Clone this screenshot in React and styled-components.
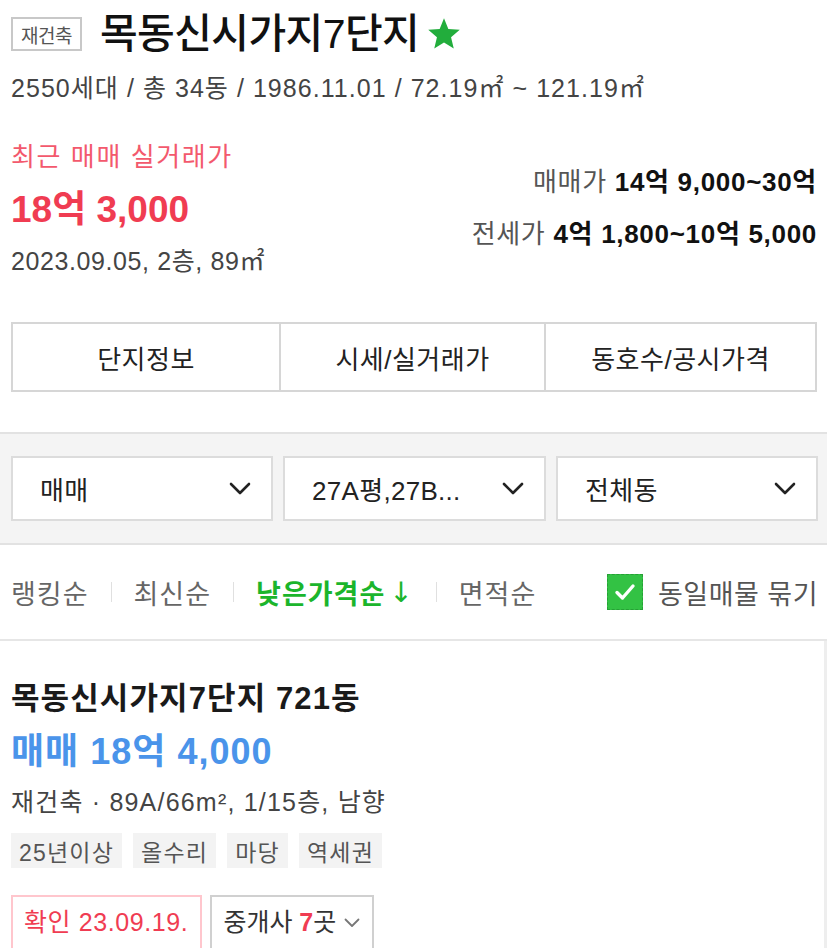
import React from "react";
import styled, { createGlobalStyle } from "styled-components";

const Global = createGlobalStyle`
  html, body { margin: 0; padding: 0; background: #fff; }
  body {
    width: 827px;
    overflow: hidden;
    font-family: "Liberation Sans", "Noto Sans CJK KR", sans-serif;
    color: #222;
  }
  * { box-sizing: border-box; }
`;

const Page = styled.div`
  width: 827px;
  display: flex;
  flex-direction: column;
`;

const Section = styled.div`
  padding: 0 10px 0 11px;
`;

const TitleRow = styled.div`
  margin-top: 10px;
  height: 48px;
  display: flex;
  align-items: center;
`;

const Badge = styled.span`
  display: inline-flex;
  align-items: center;
  justify-content: center;
  width: 71px;
  height: 34px;
  border: 2px solid #c8c8c8;
  font-size: 19px;
  color: #555;
  letter-spacing: -0.5px;
`;

const Title = styled.h1`
  margin: 0 0 0 18px;
  font-size: 41px;
  font-weight: 500;
  color: #111;
  letter-spacing: -0.6px;
  line-height: 48px;
`;

const Star = styled.svg`
  margin-left: 7px;
  width: 36px;
  height: 36px;
`;

const SubInfo = styled.div`
  margin-top: 13px;
  font-size: 25px;
  line-height: 34px;
  color: #444;
  letter-spacing: 1.05px;
`;

const PriceArea = styled.div`
  margin-top: 34px;
  display: flex;
  justify-content: space-between;
`;

const LeftCol = styled.div`
  display: flex;
  flex-direction: column;
`;

const RecentLabel = styled.div`
  font-size: 26px;
  line-height: 36px;
  color: #f3596d;
  letter-spacing: 1.6px;
`;

const RecentPrice = styled.div`
  font-size: 37px;
  line-height: 70px;
  font-weight: 700;
  color: #f03c52;
`;

const RecentMeta = styled.div`
  font-size: 25px;
  line-height: 32px;
  color: #444;
  letter-spacing: 0.6px;
`;

const RightCol = styled.div`
  padding-top: 17px;
  display: flex;
  flex-direction: column;
  align-items: flex-end;
`;

const RangeRow = styled.div`
  font-size: 26px;
  line-height: 52px;
  color: #555;
  letter-spacing: 0.7px;
  b {
    color: #111;
    font-weight: 700;
  }
`;

const Tabs = styled.div`
  margin-top: 45px;
  height: 70px;
  display: grid;
  grid-template-columns: 266px 265px 1fr;
  border: 2px solid #d6d6d6;
`;

const Tab = styled.div`
  display: flex;
  align-items: center;
  justify-content: center;
  font-size: 26px;
  color: #222;
  letter-spacing: 0.5px;
  border-left: ${(p) => (p.$first ? "none" : "2px solid #d6d6d6")};
`;

const FilterBand = styled.div`
  margin-top: 40px;
  background: #f4f4f4;
  border-top: 2px solid #e2e2e2;
  border-bottom: 2px solid #e2e2e2;
  padding: 22px 9px 22px 11px;
  display: grid;
  grid-template-columns: 262px 263px 1fr;
  gap: 10px;
`;

const Select = styled.div`
  height: 65px;
  background: #fff;
  border: 2px solid #dcdcdc;
  display: flex;
  align-items: center;
  justify-content: space-between;
  padding: 0 20px 0 27px;
  font-size: 26px;
  color: #222;
  letter-spacing: 0.3px;
`;

const Chevron = styled.svg`
  width: 22px;
  height: 14px;
`;

const SortBar = styled.div`
  height: 96px;
  display: flex;
  align-items: center;
  padding: 0 9px 0 11px;
  border-bottom: 2px solid #e6e6e6;
`;

const SortItem = styled.span`
  display: inline-flex;
  align-items: center;
  font-size: 27px;
  color: ${(p) => (p.$active ? "#1bb52c" : "#666")};
  font-weight: ${(p) => (p.$active ? 700 : 400)};
  letter-spacing: 1px;
`;

const Arrow = styled.span`
  font-family: "DejaVu Sans", sans-serif;
  font-weight: 400;
  font-size: 28px;
  margin-left: 4px;
`;

const Sep = styled.span`
  width: 1px;
  height: 20px;
  background: #e0e0e0;
  margin: 0 22px;
`;

const Bundle = styled.label`
  margin-left: auto;
  display: flex;
  align-items: center;
  gap: 15px;
  font-size: 27px;
  color: #555;
  letter-spacing: 0.5px;
`;

const CheckBox = styled.span`
  width: 36px;
  height: 36px;
  background: #33c244;
  border: 1px dashed #27a036;
  display: flex;
  align-items: center;
  justify-content: center;
`;

const Card = styled.div`
  padding: 38px 10px 0 11px;
  border-right: 3px solid #eeeeee;
  display: flex;
  flex-direction: column;
  align-items: flex-start;
`;

const CardTitle = styled.div`
  font-size: 31px;
  line-height: 40px;
  font-weight: 700;
  color: #1a1a1a;
  letter-spacing: 1.1px;
`;

const CardPrice = styled.div`
  font-size: 36px;
  line-height: 66px;
  font-weight: 700;
  color: #4a94ea;
  letter-spacing: 1px;
`;

const CardMeta = styled.div`
  font-size: 25px;
  line-height: 34px;
  color: #444;
  letter-spacing: 1.2px;
`;

const Tags = styled.div`
  margin-top: 14px;
  display: flex;
  gap: 11px;
`;

const Tag = styled.span`
  height: 35px;
  padding: 0 8px;
  background: #f3f3f3;
  display: flex;
  align-items: center;
  font-size: 23px;
  color: #555;
  letter-spacing: 1.2px;
`;

const Actions = styled.div`
  margin-top: 27px;
  display: flex;
  gap: 8px;
`;

const ActionBox = styled.div`
  height: 60px;
  padding: 8px 12px 0 11px;
  border: 2px solid ${(p) => (p.$tone === "red" ? "#ffc6cd" : "#d0d0d0")};
  border-bottom: none;
  display: flex;
  align-items: flex-start;
  gap: 8px;
  font-size: 25px;
  line-height: 34px;
  color: ${(p) => (p.$tone === "red" ? "#f03c52" : "#333")};
  letter-spacing: ${(p) => (p.$tone === "red" ? "0.6px" : "0px")};
  b {
    color: #f03c52;
    font-weight: 700;
  }
`;

const SmallChevron = styled.svg`
  width: 16px;
  height: 10px;
  margin-top: 13px;
`;

function ChevronDown() {
  return (
    <Chevron viewBox="0 0 22 14">
      <path d="M2 2 L11 11 L20 2" fill="none" stroke="#222" strokeWidth="2.6" strokeLinecap="round" strokeLinejoin="round" />
    </Chevron>
  );
}

export default function App() {
  return (
    <Page>
      <Global />
      <Section>
        <TitleRow>
          <Badge>재건축</Badge>
          <Title>목동신시가지7단지</Title>
          <Star viewBox="0 0 24 24">
            <path
              d="M12 1.5 L14.9 8.6 L22.5 9.2 L16.7 14.1 L18.5 21.6 L12 17.6 L5.5 21.6 L7.3 14.1 L1.5 9.2 L9.1 8.6 Z"
              fill="#22ad3c"
            />
          </Star>
        </TitleRow>
        <SubInfo>2550세대 / 총 34동 / 1986.11.01 / 72.19㎡ ~ 121.19㎡</SubInfo>
        <PriceArea>
          <LeftCol>
            <RecentLabel>최근 매매 실거래가</RecentLabel>
            <RecentPrice>18억 3,000</RecentPrice>
            <RecentMeta>2023.09.05, 2층, 89㎡</RecentMeta>
          </LeftCol>
          <RightCol>
            <RangeRow>
              매매가 <b>14억 9,000~30억</b>
            </RangeRow>
            <RangeRow>
              전세가 <b>4억 1,800~10억 5,000</b>
            </RangeRow>
          </RightCol>
        </PriceArea>
        <Tabs>
          <Tab $first>단지정보</Tab>
          <Tab>시세/실거래가</Tab>
          <Tab>동호수/공시가격</Tab>
        </Tabs>
      </Section>
      <FilterBand>
        <Select>
          매매
          <ChevronDown />
        </Select>
        <Select>
          27A평,27B...
          <ChevronDown />
        </Select>
        <Select>
          전체동
          <ChevronDown />
        </Select>
      </FilterBand>
      <SortBar>
        <SortItem>랭킹순</SortItem>
        <Sep />
        <SortItem>최신순</SortItem>
        <Sep />
        <SortItem $active>
          낮은가격순<Arrow>↓</Arrow>
        </SortItem>
        <Sep />
        <SortItem>면적순</SortItem>
        <Bundle>
          <CheckBox>
            <svg width="22" height="18" viewBox="0 0 22 18">
              <path d="M3 9.5 L8.5 15 L19 3" fill="none" stroke="#fff" strokeWidth="3.4" strokeLinecap="round" strokeLinejoin="round" />
            </svg>
          </CheckBox>
          동일매물 묶기
        </Bundle>
      </SortBar>
      <Card>
        <CardTitle>목동신시가지7단지 721동</CardTitle>
        <CardPrice>매매 18억 4,000</CardPrice>
        <CardMeta>재건축 · 89A/66m², 1/15층, 남향</CardMeta>
        <Tags>
          <Tag>25년이상</Tag>
          <Tag>올수리</Tag>
          <Tag>마당</Tag>
          <Tag>역세권</Tag>
        </Tags>
        <Actions>
          <ActionBox $tone="red">확인 23.09.19.</ActionBox>
          <ActionBox>
            <span>
              중개사 <b>7</b>곳
            </span>
            <SmallChevron viewBox="0 0 16 10">
              <path d="M1.5 1.5 L8 8 L14.5 1.5" fill="none" stroke="#777" strokeWidth="1.8" strokeLinecap="round" strokeLinejoin="round" />
            </SmallChevron>
          </ActionBox>
        </Actions>
      </Card>
    </Page>
  );
}
